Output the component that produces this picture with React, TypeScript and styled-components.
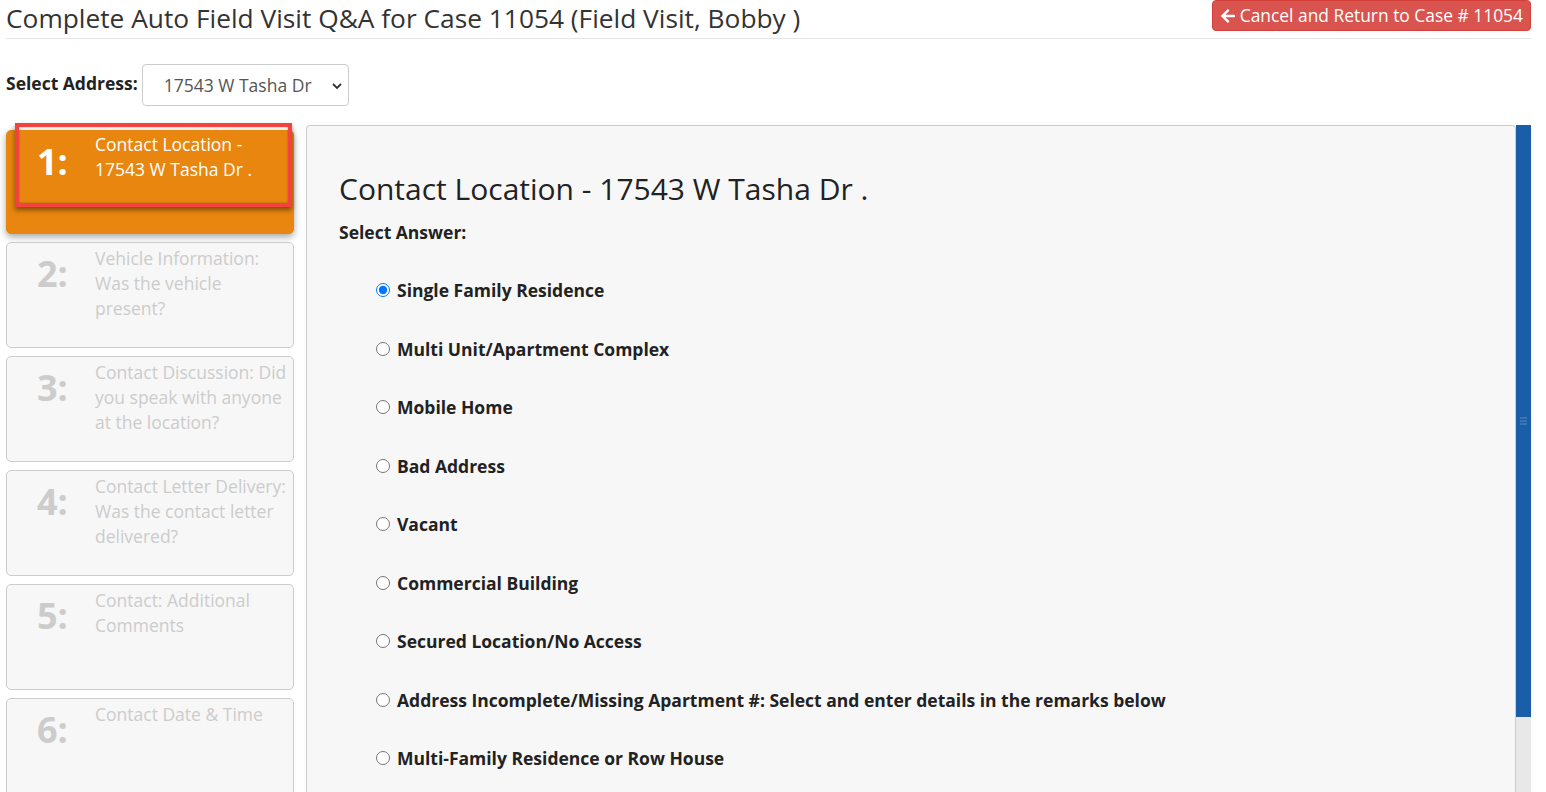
import React from "react";
import styled, { createGlobalStyle } from "styled-components";
import { FaArrowLeft } from "react-icons/fa";

const GlobalStyle = createGlobalStyle`
  html, body {
    margin: 0;
    padding: 0;
    height: 100%;
    overflow: hidden;
    background: #fff;
  }
  body {
    font-family: "Open Sans", "Liberation Sans", sans-serif;
    color: #222;
  }
  * {
    box-sizing: border-box;
  }
`;

const Page = styled.div`
  padding: 0 15px 0 6px;
  height: 792px;
  display: flex;
  flex-direction: column;
`;

const Header = styled.div`
  display: flex;
  justify-content: space-between;
  align-items: flex-start;
  height: 39px;
  border-bottom: 1px solid #e5e5e5;
`;

const Title = styled.h2`
  margin: 0;
  font-size: 26.3px;
  line-height: 36px;
  font-weight: 400;
  color: #333;
  white-space: nowrap;
`;

const CancelButton = styled.button`
  display: flex;
  align-items: center;
  gap: 4px;
  height: 31px;
  padding: 0 7px;
  background: #d9534f;
  border: 1px solid #d43f3a;
  border-radius: 4px;
  color: #fff;
  font-family: inherit;
  font-size: 17.4px;
  line-height: 1;
  white-space: nowrap;
  cursor: pointer;
  svg {
    width: 16px;
    height: 16px;
  }
`;

const AddressRow = styled.div`
  display: flex;
  align-items: flex-start;
  gap: 4px;
  margin-top: 25px;
`;

const Label = styled.label`
  margin-top: 7px;
  font-size: 17.5px;
  font-weight: 700;
  line-height: 24px;
  color: #222;
`;

const SelectWrap = styled.div`
  position: relative;
  width: 207px;
  height: 42px;
`;

const Select = styled.select`
  appearance: none;
  width: 100%;
  height: 100%;
  padding: 0 30px 0 21px;
  border: 1px solid #ccc;
  border-radius: 4px;
  background: #fff;
  font-family: inherit;
  font-size: 17.5px;
  color: #555;
`;

const Chevron = styled.svg`
  position: absolute;
  right: 6px;
  top: 16px;
  width: 12px;
  height: 12px;
  pointer-events: none;
`;

const Body = styled.div`
  display: flex;
  margin-top: 19px;
  flex: 1;
  min-height: 0;
`;

const Steps = styled.div`
  width: 288px;
  flex-shrink: 0;
  display: flex;
  flex-direction: column;
  gap: 8px;
  padding-top: 5px;
  margin-right: 12px;
`;

const StepCard = styled.div<{ $active?: boolean }>`
  position: relative;
  flex-shrink: 0;
  height: ${(p) => (p.$active ? "104px" : "106px")};
  display: grid;
  grid-template-columns: 88px 193px;
  border-radius: 5px;
  background: ${(p) => (p.$active ? "#e8860f" : "#f7f7f7")};
  border: 1px solid ${(p) => (p.$active ? "#e8860f" : "#ccc")};
  color: ${(p) => (p.$active ? "#fff" : "#ccc")};
  box-shadow: ${(p) => (p.$active ? "0 3px 7px rgba(0,0,0,0.35)" : "none")};
`;

const StepNumber = styled.div`
  padding-left: 30px;
  padding-top: 7px;
  font-size: 36px;
  font-weight: 700;
  line-height: 48px;
`;

const StepText = styled.div<{ $active?: boolean }>`
  padding-top: ${(p) => (p.$active ? "1px" : "3px")};
  font-size: 17.5px;
  line-height: 25px;
`;

const Highlight = styled.div`
  position: absolute;
  left: 8px;
  top: -8px;
  width: 277px;
  height: 84px;
  border: 4px solid #f2433f;
  box-shadow: 0 3px 5px rgba(0, 0, 0, 0.45), inset 0 0 2px rgba(0, 0, 0, 0.35);
  pointer-events: none;
`;

const Panel = styled.div`
  flex: 1;
  background: #f7f7f7;
  border: 1px solid #ccc;
  border-bottom: none;
  border-radius: 4px 4px 0 0;
  padding-left: 32px;
`;

const Question = styled.h3`
  margin: 46px 0 0;
  font-size: 30px;
  font-weight: 400;
  line-height: 33px;
  color: #222;
`;

const AnswerLabel = styled.div`
  margin-top: 15px;
  font-size: 17.5px;
  font-weight: 700;
  line-height: 24px;
  color: #222;
`;

const Options = styled.div`
  margin-top: 34px;
  padding-left: 37px;
  display: flex;
  flex-direction: column;
  gap: 34.5px;
`;

const Option = styled.label`
  display: flex;
  align-items: center;
  gap: 7px;
  font-size: 17.5px;
  font-weight: 700;
  line-height: 24px;
  color: #222;
  white-space: nowrap;
  input {
    margin: 0;
    width: 14px;
    height: 14px;
  }
`;

const Rail = styled.div`
  width: 15px;
  flex-shrink: 0;
  background: #e8e8e8;
`;

const Thumb = styled.div`
  height: 592px;
  background: #1a5da8;
  display: flex;
  flex-direction: column;
  align-items: center;
  justify-content: center;
  gap: 1px;
`;

const Grip = styled.span`
  display: block;
  width: 7px;
  height: 2px;
  background: #3a74b4;
`;

const steps = [
  { n: 1, text: "Contact Location - 17543 W Tasha Dr ." },
  { n: 2, text: "Vehicle Information: Was the vehicle present?" },
  { n: 3, text: "Contact Discussion: Did you speak with anyone at the location?" },
  { n: 4, text: "Contact Letter Delivery: Was the contact letter delivered?" },
  { n: 5, text: "Contact: Additional Comments" },
  { n: 6, text: "Contact Date & Time" },
];

const answers = [
  "Single Family Residence",
  "Multi Unit/Apartment Complex",
  "Mobile Home",
  "Bad Address",
  "Vacant",
  "Commercial Building",
  "Secured Location/No Access",
  "Address Incomplete/Missing Apartment #: Select and enter details in the remarks below",
  "Multi-Family Residence or Row House",
];

export default function App() {
  return (
    <>
      <GlobalStyle />
      <Page>
        <Header>
          <Title>Complete Auto Field Visit Q&amp;A for Case 11054 (Field Visit, Bobby )</Title>
          <CancelButton>
            <FaArrowLeft />
            Cancel and Return to Case # 11054
          </CancelButton>
        </Header>

        <AddressRow>
          <Label>Select Address:</Label>
          <SelectWrap>
            <Select defaultValue="17543">
              <option value="17543">17543 W Tasha Dr</option>
            </Select>
            <Chevron viewBox="0 0 12 12">
              <path d="M2 4 L6 8 L10 4" fill="none" stroke="#333" strokeWidth="1.8" />
            </Chevron>
          </SelectWrap>
        </AddressRow>

        <Body>
          <Steps>
            {steps.map((s) => (
              <StepCard key={s.n} $active={s.n === 1}>
                <StepNumber>{s.n}:</StepNumber>
                <StepText $active={s.n === 1}>{s.text}</StepText>
                {s.n === 1 && <Highlight />}
              </StepCard>
            ))}
          </Steps>

          <Panel>
            <Question>Contact Location - 17543 W Tasha Dr .</Question>
            <AnswerLabel>Select Answer:</AnswerLabel>
            <Options>
              {answers.map((a, i) => (
                <Option key={a}>
                  <input type="radio" name="answer" defaultChecked={i === 0} />
                  {a}
                </Option>
              ))}
            </Options>
          </Panel>

          <Rail>
            <Thumb>
              <Grip />
              <Grip />
              <Grip />
            </Thumb>
          </Rail>
        </Body>
      </Page>
    </>
  );
}
